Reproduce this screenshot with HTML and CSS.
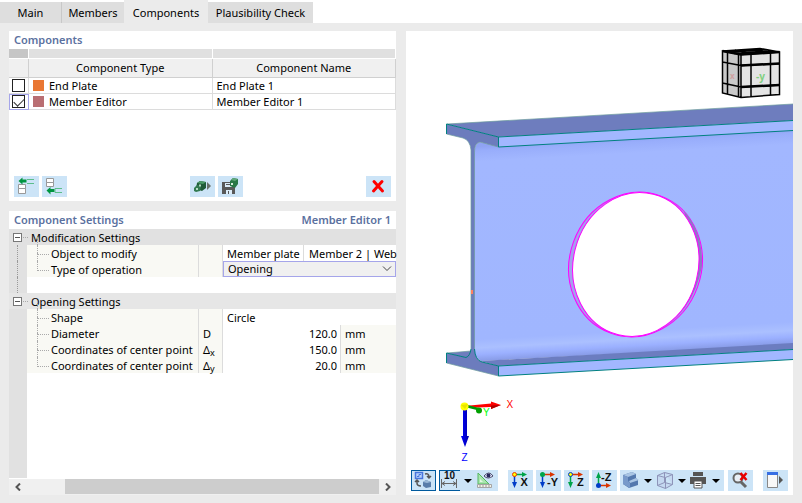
FILE: index.html
```html
<!DOCTYPE html>
<html lang="en">
<head>
<meta charset="utf-8">
<title>Steel joint components</title>
<link rel="stylesheet" href="styles.css">
</head>
<body>
<nav class="tabs">
  <button class="tab tab-main">Main</button>
  <button class="tab tab-members">Members</button>
  <button class="tab tab-components active" aria-current="page">Components</button>
  <button class="tab tab-check">Plausibility Check</button>
</nav>
<main class="workspace">
  <div class="side">
    <section class="panel components">
      <header class="panel-title"><h2>Components</h2></header>
      <table class="list">
        <colgroup><col class="c-check"><col><col></colgroup>
        <thead>
          <tr class="strip"><td class="dark"></td><td></td><td></td></tr>
          <tr><th></th><th>Component Type</th><th>Component Name</th></tr>
        </thead>
        <tbody>
          <tr><td class="check"><input type="checkbox" aria-label="End Plate 1"></td><td><span class="type"><i class="swatch orange"></i>End Plate</span></td><td>End Plate 1</td></tr>
          <tr><td class="check current"><input type="checkbox" aria-label="Member Editor 1" checked></td><td><span class="type"><i class="swatch rose"></i>Member Editor</span></td><td>Member Editor 1</td></tr>
        </tbody>
      </table>
      <div class="actions">
        <button class="tool" aria-label="Insert above"><svg width="25" height="21" viewBox="0 0 25 21"><g fill="#fff" stroke="#999"><path d="M4.500 8.500h7v4h-7zM4.500 12.500h7v5h-7z"/></g><path d="M4.500 5l4-3.500v2h4v3h-4v2z" fill="#009540"/><path d="M20 3.500h-7M20 7.500h-7" fill="none" stroke="#5cbd8b"/></svg></button>
        <button class="tool" aria-label="Insert below"><svg width="25" height="21" viewBox="0 0 25 21"><g fill="#fff" stroke="#999"><path d="M4.500 2.500h7v4h-7zM4.500 6.500h7v4h-7z"/></g><path d="M4.500 14.500l4-3.500v2h4v3h-4v2.500z" fill="#009540"/><path d="M20 12.500h-7v4h7" fill="none" stroke="#5cbd8b"/></svg></button>
        <span class="middle">
        <button class="tool" aria-label="Load component"><svg width="25" height="21" viewBox="0 0 25 21"><path d="M7 7l3-2 6 1v6l-4 3-6-2z" fill="#1f5b38"/><path d="M7 7l3-2 6 1-3 2z" fill="#4b9a68"/><path d="M4 12l3-3 4 1-1 5-4 1-2-1z" fill="#337b51"/><path d="M9 8.500h2v2H9zM6 12h2v2H6z" fill="#b5dcc5"/><path d="M17 6l4 4-4 4z" fill="#68706b"/></svg></button>
        <button class="tool" aria-label="Save component"><svg width="25" height="21" viewBox="0 0 25 21"><path d="M4 6h12l1 2v10H4z" fill="#595959"/><path d="M7 7h7v4H7zM8 14h6v4H8z" fill="#dcecf8"/><path d="M8 8.500h5M10.500 15v3" stroke="#595959"/><path d="M12 5l3-3 5 1v5l-3 4-5-2z" fill="#277646"/><path d="M13 4l2-2 5 1-3 2z" fill="#61a77a"/><path d="M13 7h2v2h-2z" fill="#d5eadc"/></svg></button>
        </span>
        <button class="tool" aria-label="Delete component"><svg width="25" height="21" viewBox="0 0 25 21"><path d="M8 5.500l8.500 9.500M16 5.500L7.500 15" stroke="#f00" stroke-width="3" stroke-linecap="round"/></svg></button>
      </div>
    </section>

    <section class="panel settings">
      <header class="panel-title"><h2>Component Settings</h2><h2>Member Editor 1</h2></header>
      <div class="tree">
        <table class="props">
          <colgroup><col class="c-gutter"><col class="c-name"><col class="c-symbol"><col class="c-plate"><col class="c-rest"><col></colgroup>
          <tbody>
            <tr class="group"><td class="node"><button class="toggle" aria-label="Collapse Modification Settings"></button></td><th colspan="5">Modification Settings</th></tr>
            <tr><td class="line"></td><th>Object to modify</th><td class="symbol"></td><td class="plate">Member plate</td><td class="member" colspan="2">Member 2 | Web</td></tr>
            <tr class="last"><td class="line"></td><th><label for="operation">Type of operation</label></th><td class="symbol"></td><td class="choice" colspan="3"><select id="operation"><option>Opening</option></select><svg class="chevron" width="10" height="6" viewBox="0 0 10 6"><path d="M1 .5l4 4 4-4" fill="none" stroke="#444"/></svg></td></tr>
            <tr class="space"><td class="line"></td><td colspan="5"></td></tr>
          </tbody>
          <tbody>
            <tr class="group second"><td class="node"><button class="toggle" aria-label="Collapse Opening Settings"></button></td><th colspan="5">Opening Settings</th></tr>
            <tr><td></td><th>Shape</th><td class="symbol"></td><td colspan="3">Circle</td></tr>
            <tr><td></td><th>Diameter</th><td class="symbol">D</td><td class="number" colspan="2">120.0</td><td class="unit">mm</td></tr>
            <tr><td></td><th>Coordinates of center point</th><td class="symbol">Δ<sub>x</sub></td><td class="number" colspan="2">150.0</td><td class="unit">mm</td></tr>
            <tr class="last"><td></td><th>Coordinates of center point</th><td class="symbol">Δ<sub>y</sub></td><td class="number" colspan="2">20.0</td><td class="unit">mm</td></tr>
          </tbody>
        </table>
      </div>
      <div class="scroll">
        <button aria-label="Scroll left"><svg width="6" height="8" viewBox="0 0 6 8"><path d="M5 .5L1.500 4 5 7.500" fill="none" stroke="#555" stroke-width="2"/></svg></button>
        <div class="track"><div class="thumb"></div></div>
        <button aria-label="Scroll right"><svg width="6" height="8" viewBox="0 0 6 8"><path d="M1 .5L4.500 4 1 7.500" fill="none" stroke="#555" stroke-width="2"/></svg></button>
      </div>
    </section>
  </div>

  <section class="panel view">
    <svg class="scene" viewBox="406 31 387 434" preserveAspectRatio="xMaxYMin meet" role="img" aria-label="Beam with circular opening">
      <defs>
        <linearGradient id="web" gradientUnits="userSpaceOnUse" x1="630" y1="138" x2="642" y2="354">
          <stop offset="0" stop-color="#8fa3f3"/><stop offset=".02" stop-color="#98adfb"/><stop offset=".07" stop-color="#a2b7ff"/><stop offset=".89" stop-color="#a0b6ff"/><stop offset=".93" stop-color="#abc0ff"/><stop offset=".96" stop-color="#9bb0ff"/><stop offset="1" stop-color="#8396e0"/>
        </linearGradient>
        <linearGradient id="zaxis"><stop offset="0" stop-color="#0000ff"/><stop offset="1" stop-color="#0000a8"/></linearGradient>
      </defs>
      <path d="M474 153Q475 143 480 142L498.500 146.500 793 130V345L481 361Q474 358 474 348z" fill="url(#web)"/>
      <path d="M480 361L793 343V349.500L498.500 366z" fill="#6c7dc0"/>
      <path d="M447 124L793 104V120.500L498.500 137z" fill="#6e7dbe"/>
      <path d="M498.500 137L793 120.500V130.500L498.500 147zM498.500 366L793 349.500V359.500L498.500 376z" fill="#a2b7ff"/>
      <path d="M447 353L471 351 472 357 467 358z" fill="#6e7dbe"/>
      <path d="M446.500 124L498.500 137V147L480 142Q474.500 143 474.500 152V349Q475 360 482 362L498.500 366V376L446.500 363V353L466 357.500Q471 356 471 349V150Q470 140 463 138L446.500 134z" fill="#6c7cbd"/>
      <g fill="none" stroke="#6f9d9d" stroke-width=".7"><path d="M447 124L793 104M446.500 134L463 138Q470 140 471 150V349M474.500 349V152Q474.500 143 480 142L498.500 147M447 353L471 351M446.500 363L498.500 376"/></g>
      <g fill="none" stroke="#008080"><path d="M446.500 134V124L498.500 137V147L793 130.500M498.500 137L793 120.500M446.500 363V353L466 357.500Q470 356 471 349M474.500 349Q475 360 482 362L498.500 366V376L793 359.500M498.500 366L793 349.500"/></g>
      <path d="M471 290h2v4h-2z" fill="#ff8060"/>
      <ellipse cx="635.500" cy="264.500" rx="66" ry="73" transform="rotate(20 635.500 264.500)" fill="#a5a0ee" stroke="#f0f"/>
      <path d="M684 211Q703 232 702 266Q693 314 653 333L680 310L698 270z" fill="#8d79c6"/>
      <ellipse cx="635.800" cy="264.500" rx="62.500" ry="72.500" transform="rotate(14 635.800 264.500)" fill="#fff" stroke="#f0f"/>
      <g class="cube">
        <path d="M741 54.500L779.500 52V94.500L741 97.500z" fill="#e4e4e4"/>
        <path d="M722.500 51L741 54.500V97.500L722.500 93z" fill="#c9c9c9"/>
        <path d="M722.500 51L760 48.500 779.500 52 741 54.500z" fill="#777"/>
        <path d="M741 54.500L779.500 52V94.500L741 97.500 722.500 93V51zM722.500 51L760 48.500 779.500 52M741 54.500V97.500M751 54V97M770.500 52.500V95M741 65.500L779.500 63.500M741 87L779.500 85M722.500 62L741 65.500M722.500 83L741 87M727.500 51.500V94M738.500 54V97M728 52L766 49.500M734 53.500L773 51M735 50L752 54M748 49.500L770 53" fill="none" stroke="#000" stroke-width="1.500"/>
        <path d="M741 65.500L779.500 63.500M741 87L779.500 85M722.500 51L741 54.500 779.500 52" fill="none" stroke="#000" stroke-width="2.500"/>
        <text class="cube-face" x="756" y="80">-y</text>
        <text class="cube-side" x="730" y="79">x</text>
      </g>
      <g class="axes">
        <path d="M464.500 406L491 403.500V401.500L501 405 491 409V407L465 408z" fill="#f00"/>
        <path d="M491 405.500L501 405 491 409z" fill="#b00000"/>
        <path d="M463 407H467V436H469L465 447 461 436H463z" fill="url(#zaxis)"/>
        <path d="M466 406L480 409.500" stroke="#009700" stroke-width="2.500"/><circle cx="479" cy="410.500" r="3" fill="#00a000"/>
        <circle cx="464.500" cy="406.500" r="4" fill="#ff0"/><path d="M461 405l7-1-3 5z" fill="#d4c900" opacity=".5"/>
        <text x="506.500" y="408" fill="#f00">X</text><text x="483" y="416" fill="#0f0">Y</text><text x="461.500" y="461" fill="#00f">Z</text>
      </g>
    </svg>
    <div class="toolbar">
      <button class="tool pressed" aria-label="Switch view"><svg width="23" height="19" viewBox="0 0 23 19"><rect x="3.500" y="1.500" width="7" height="6" fill="#b6d1fa" stroke="#4876dc" stroke-width="1.500"/><path d="M5 5.500h2v-2h2" fill="none" stroke="#4876dc"/><path d="M13 3q4-1 4 3M15 5l2 2 2-2M5 10v2q0 3 4 3M3 11l2-2 2 2" fill="none" stroke="#555" stroke-width="1.500"/><path d="M11 11l3-2 5 2v5l-5 1-3-2z" fill="#597daa"/><path d="M11 11l3-2 5 2-4 1z" fill="#9bb9d8"/></svg></button>
      <div class="group-tools measure">
        <button class="tool pressed open" aria-label="Dimensions"><svg width="20" height="19" viewBox="0 0 20 19"><text class="dimension" x="4" y="8">10</text><path d="M1.500 8v9M16.500 8v9M2 12.500h14M5 10.500l-3 2 3 2M13 10.500l3 2-3 2" fill="none" stroke="#666"/></svg></button>
        <button class="drop wide" aria-label="Dimension options"></button>
        <button class="tool narrow" aria-label="Show measurements"><svg width="20" height="21" viewBox="0 0 20 21"><path d="M2 3l11 11H2z" fill="#a9e6ae" stroke="#56b760"/><path d="M4 9l3 3H4z" fill="#e4f7e5"/><path d="M1.500 14.500h14v3h-14z" fill="#f3f3e6" stroke="#a5a5a5"/><path d="M4 15v2M7 15v2M10 15v2M13 15v2" stroke="#999"/><path d="M8 6q5-6 9 0-5 4-9 0z" fill="#e3e9ff" stroke="#484868"/><circle cx="12.500" cy="5.500" r="2" fill="#29295d"/></svg></button>
      </div>
      <div class="axis-tools">
        <button class="tool" aria-label="View in X"><svg width="25" height="21" viewBox="0 0 25 21"><path d="M8 4.500h7" stroke="#00a44a" stroke-width="1.500"/><path d="M14 2l5 2.500-5 2.500z" fill="#00a44a"/><path d="M6.500 6v7" stroke="#003cc8" stroke-width="1.500"/><path d="M4 12h5l-2.500 6z" fill="#003cc8"/><circle cx="6.500" cy="4.500" r="2" fill="#ff0" stroke="#f03a00"/><text class="axis-label" x="12.500" y="16">X</text></svg></button>
        <button class="tool" aria-label="View in minus Y"><svg width="25" height="21" viewBox="0 0 25 21"><path d="M8 4.500h7" stroke="#db3500" stroke-width="1.500"/><path d="M14 2l5 2.500-5 2.500z" fill="#db3500"/><path d="M6.500 6v7" stroke="#003cc8" stroke-width="1.500"/><path d="M4 12h5l-2.500 6z" fill="#003cc8"/><circle cx="6.500" cy="4.500" r="2.500" fill="#00a44a"/><text class="axis-label" x="11" y="16">-Y</text></svg></button>
        <button class="tool" aria-label="View in Z"><svg width="25" height="21" viewBox="0 0 25 21"><path d="M8 4.500h7" stroke="#db3500" stroke-width="1.500"/><path d="M14 2l5 2.500-5 2.500z" fill="#db3500"/><path d="M6.500 6v7" stroke="#00a44a" stroke-width="1.500"/><path d="M4 12h5l-2.500 6z" fill="#00a44a"/><circle cx="6.500" cy="4.500" r="2" fill="#ff0" stroke="#003cc8"/><text class="axis-label" x="13" y="16">Z</text></svg></button>
        <button class="tool" aria-label="View in minus Z"><svg width="25" height="21" viewBox="0 0 25 21"><path d="M8 15.500h7" stroke="#db3500" stroke-width="1.500"/><path d="M14 13l5 2.500-5 2.500z" fill="#db3500"/><path d="M6.500 7v7" stroke="#00a44a" stroke-width="1.500"/><path d="M4 8h5L6.500 2z" fill="#00a44a"/><circle cx="6.500" cy="15.500" r="2.500" fill="#003cc8"/><text class="axis-label" x="9" y="11">-Z</text></svg></button>
        <div class="group-tools display">
          <button class="tool narrow" aria-label="Solid display"><svg width="20" height="21" viewBox="0 0 20 21"><path d="M2 5l9-3 4 2v4l2 2v5l-9 3-6-4z" fill="#5378ae"/><path d="M2 5l9-3 4 2-8 3zM8 11l7-3 3 2-9 3z" fill="#a9c5e4"/><path d="M2 5l5 2v4l2 2v5l-7-4z" fill="#789aca"/></svg></button><button class="drop" aria-label="Display options"></button>
          <button class="tool narrow" aria-label="Wireframe display"><svg width="20" height="21" viewBox="0 0 20 21"><path d="M2.500 5.500l7-3 8 2v10l-7 4-8-3zM2.500 5.500l8 2 7-3M10.500 7.500v11M9.500 2.500v10l8 2M9.500 12.500l-7 3" fill="#becbea" fill-opacity=".5" stroke="#8e94b9"/></svg></button><button class="drop" aria-label="Box options"></button>
          <button class="tool narrow" aria-label="Print"><svg width="20" height="21" viewBox="0 0 20 21"><path d="M4 2h10v4H4zM1 7h16v7H1z" fill="#555"/><path d="M5 11h8v7H5z" fill="#fff" stroke="#555"/><path d="M6.500 13.500h5M6.500 15.500h5" stroke="#555"/></svg></button><button class="drop" aria-label="Print options"></button>
        </div>
      </div>
      <button class="tool" aria-label="Clear search"><svg width="25" height="21" viewBox="0 0 25 21"><circle cx="10" cy="8" r="4.500" fill="#e9eff5" stroke="#666" stroke-width="2"/><path d="M13 12l5 5" stroke="#666" stroke-width="3"/><path d="M12.500 3l6 7M18.500 3l-6 7" stroke="#e90000" stroke-width="2.500"/></svg></button>
      <button class="tool end" aria-label="Open side panel"><svg width="25" height="21" viewBox="0 0 25 21"><path d="M4.500 2.500h10v15h-10z" fill="#f8f8f8" stroke="#888"/><path d="M4 2h11v3H4z" fill="#376fe4"/><path d="M16 6l4 4-4 4z" fill="#555"/></svg></button>
    </div>
  </section>
</main>
</body>
</html>
```

FILE: styles.css
```css
* { box-sizing: border-box; }
body { margin: 0; min-height: 100vh; display: flex; flex-direction: column; background: #fff; color: #000; font: 11px/16px "Noto Sans", "Open Sans", sans-serif; }
button { padding: 0; border: 0; color: inherit; font: inherit; }
svg { display: block; }
h2 { margin: 0; color: #5b719f; font-size: 11px; line-height: 18px; font-weight: 600; }

.tabs { display: flex; align-items: flex-end; height: 23px; }
.tab { height: 21px; background: #dedede; white-space: nowrap; }
.tab-main { width: 62px; border-right: 1px solid #c8c8c8; }
.tab-members { width: 62px; }
.tab-components { width: 84px; }
.tab-check { width: 105px; }
.tab.active { height: 23px; padding-top: 2px; background: #ebebeb; }

.workspace { flex: 1; display: grid; grid-template-columns: minmax(0, 1fr) minmax(0, 1fr); gap: 10px; padding: 8px 9px; background: #ebebeb; }
.side { display: flex; flex-direction: column; gap: 10px; }
.panel { display: flex; flex-direction: column; background: #fff; }
.panel-title { display: flex; justify-content: space-between; height: 18px; padding: 0 5px; }
table { width: 100%; border-collapse: separate; border-spacing: 0; table-layout: fixed; }
td, th { height: 16px; padding: 0; text-align: left; font-weight: 400; white-space: nowrap; }

.components { min-height: 170px; }
.c-check { width: 20px; }
.strip td { height: 10px; border-right: 1px solid #fff; border-bottom: 1px solid #fff; background: #e0e0e0; }
.strip .dark { background: #c6c6c6; }
.list th { height: 19px; border-right: 1px solid #d0d0d0; border-bottom: 1px solid #d0d0d0; background: #f0f0f0; text-align: center; }
.list tbody td { padding-left: 4px; border-right: 1px solid #dcdcdc; border-bottom: 1px solid #dcdcdc; line-height: 15px; }
.list tbody .check { padding: 0 0 0 3px; }
.list tbody .current { outline: 1px solid #a5a5ea; outline-offset: -1px; }
.check input { appearance: none; display: grid; place-items: center; width: 13px; height: 13px; margin: 0; border: 1px solid #222; background: #fff; }
.check input:checked::before { content: ""; width: 9px; height: 5px; border: solid #333; border-width: 0 0 1px 1px; transform: translateY(-1px) rotate(-45deg); }
.type { display: flex; align-items: center; gap: 5px; }
.swatch { width: 11px; height: 11px; }
.orange { background: #e97733; }
.rose { background: #b96e72; }

.actions { display: flex; gap: 3px; margin-top: auto; padding: 0 5px 4px; }
.middle { display: flex; gap: 3px; margin: 0 auto; }
.tool { flex: none; display: grid; place-items: center; width: 25px; height: 21px; background: #cce4f7; }

.settings { flex: 1; }
.tree { flex: 1; padding-bottom: 16px; border-bottom: 1px solid #fff; background: linear-gradient(to right, #e1e1e1 18px, #fff 18px); }
.c-gutter { width: 18px; }
.c-name { width: 172px; }
.c-symbol { width: 24px; }
.c-plate { width: 81px; }
.c-rest { width: 37px; }
.props td, .props th { padding-top: 2px; line-height: 14px; }
.props td { padding-left: 4px; }
.props th { position: relative; padding-left: 24px; border-right: 1px solid #dcdcdc; background: #f9f9f4; }
.props th::before { content: ""; position: absolute; top: 0; left: 10px; width: 11px; height: 9px; border: dotted #aaa; border-width: 0 0 1px 1px; }
.props tr:not(.last) th::after { content: ""; position: absolute; top: 8px; bottom: 0; left: 10px; border-left: 1px dotted #aaa; }
.props .group th { padding-left: 4px; border: 0; background: #e1e1e1; }
.props .group th::before { top: 8px; left: -4px; width: 5px; height: 0; border-width: 1px 0 0; }
.props .group th::after { content: none; }
.props .second th { background: #e6e6e6; }
.props .node { padding: 1px 0 0 4px; background: #e1e1e1; }
.props .second .node { background: #e6e6e6; }
.toggle { display: grid; place-items: center; width: 9px; height: 9px; border: 1px solid #777; background: #fff; }
.toggle::before { content: ""; width: 5px; height: 1px; background: #555; }
.line { position: relative; }
.line::before { content: ""; position: absolute; inset: 0 auto 0 8px; border-left: 1px dotted #999; }
.props .symbol { border-right: 1px solid #dcdcdc; background: #f9f9f4; }
sub { font-size: 9px; line-height: 0; vertical-align: -2px; }
.plate { border-right: 1px solid #dcdcdc; }
.props .member { padding-left: 5px; }
.props .choice { position: relative; padding: 0; }
.choice select { display: block; appearance: none; width: 100%; height: 16px; padding: 0 4px; border: 1px solid #a5a5ea; border-radius: 0; background: #f0f0f0; color: #000; font: 11px/14px "Noto Sans", "Open Sans", sans-serif; }
.chevron { position: absolute; top: 5px; right: 4px; pointer-events: none; }
.props .number { padding-right: 3px; border-right: 1px solid #dcdcdc; text-align: right; }
.props .unit { background: #f9f9f4; }
.scroll { display: flex; height: 16px; background: #f0f0f0; }
.scroll button { display: grid; place-items: center; width: 17px; height: 15px; background: none; }
.track { flex: 1; }
.thumb { width: 89%; height: 15px; margin-left: auto; background: #cdcdcd; }

.scene { flex: 1; width: 100%; min-height: 0; }
.cube-face { fill: #80d080; font: bold 10px "Noto Sans", sans-serif; }
.cube-side { fill: #d0a0a0; font: bold 8px "Noto Sans", sans-serif; }
.axes text { font: 10px "Liberation Sans", sans-serif; }
.toolbar { display: flex; padding: 5px 5px 4px; }
.pressed { border: 1px solid #005a9e; }
.group-tools { display: flex; background: #cce4f7; }
.measure { margin-left: 3px; padding-right: 2px; }
.display { padding: 0 1px; }
.open { width: 21px; border-right: 0; }
.narrow { width: 20px; }
.drop { display: grid; place-items: center; width: 14px; background: #cce4f7; }
.wide { width: 16px; }
.drop::before { content: ""; border: solid transparent; border-width: 4px 4px 0; border-top-color: #000; }
.axis-tools { display: flex; gap: 3px; margin: 0 4px 0 10px; }
.end { margin-left: auto; }
.dimension, .axis-label { fill: #111; font: bold 10px "Liberation Sans", sans-serif; }
.axis-label { font-size: 11px; }
```
